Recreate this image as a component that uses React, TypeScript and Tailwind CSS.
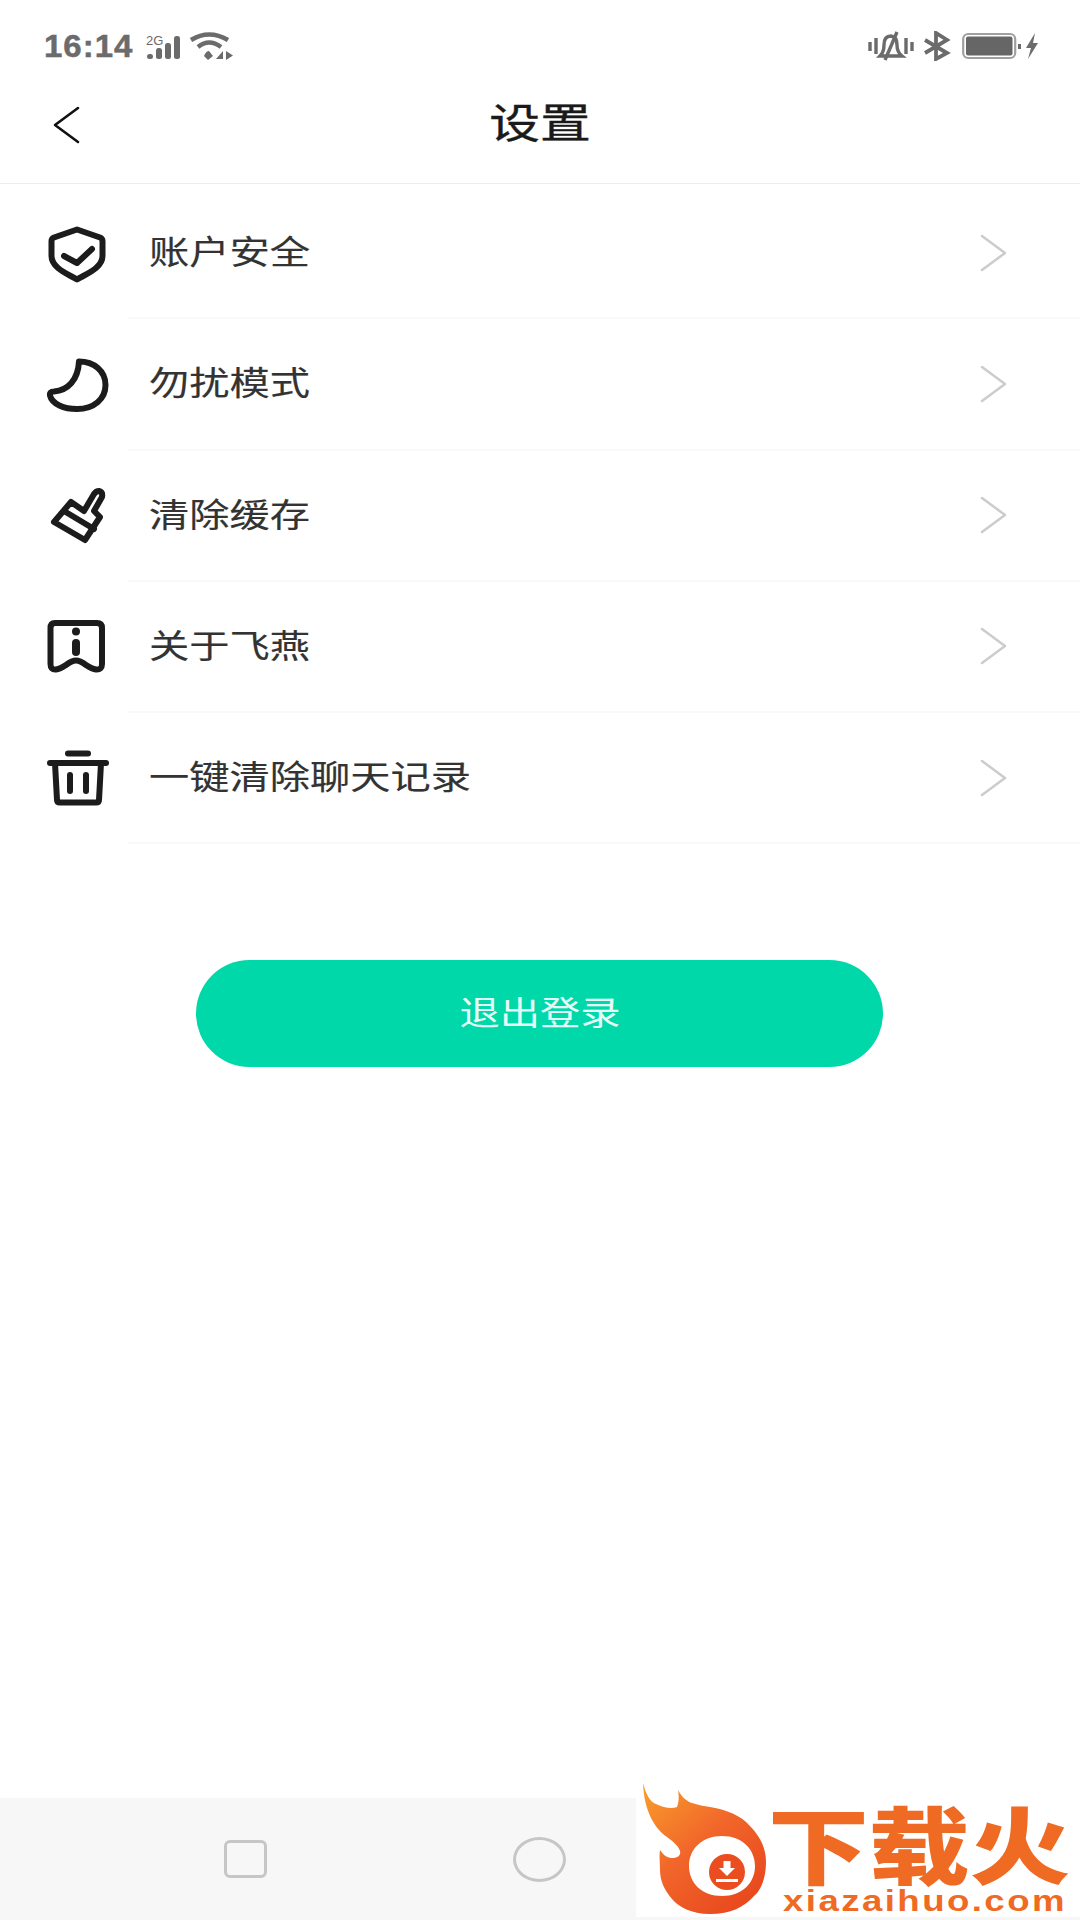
import React from "react";

const cjk = "font-['Noto_Sans_CJK_SC','Noto_Sans',sans-serif]";

function Shield() {
  return (
    <svg width="64" height="64" viewBox="0 0 64 64" fill="none" stroke="#1c1c1c" strokeWidth="6" strokeLinecap="round" strokeLinejoin="round">
      <path d="M33 8.5 L56 16.5 Q58.5 17.5 58.5 20 V35 C58.5 47 42 53 33 58.5 C24 53 7.5 47 7.5 35 V20 Q7.5 17.5 10 16.5 Z" />
      <path d="M20 35 L33 42 L48 28" />
    </svg>
  );
}
function Moon() {
  return (
    <svg width="66" height="64" viewBox="0 0 66 64" fill="none" stroke="#1c1c1c" strokeWidth="6" strokeLinecap="round" strokeLinejoin="round">
      <path d="M35 9.5 C50 9.5 61.5 19 61.5 33 C61.5 47 50 57 33 57 C20 57 8 52 6 43.5 C5.5 40.5 7 39.5 10 39.5 C24 38.5 34 28 35 9.5 Z" />
    </svg>
  );
}
function Broom() {
  return (
    <svg width="64" height="64" viewBox="0 0 64 64" fill="none" stroke="#1c1c1c" strokeWidth="6" strokeLinecap="round" strokeLinejoin="round">
      <path d="M50 11 L40 28 L27 19 L10 39 L41 57 L56 34 L50 28 L58 14 Q59 9 55 8 Q52 8 50 11 Z" />
      <path d="M20 28 L50 46" />
    </svg>
  );
}
function Info() {
  return (
    <svg width="64" height="64" viewBox="0 0 64 64" fill="none" stroke="#1c1c1c" strokeWidth="6" strokeLinecap="round" strokeLinejoin="round">
      <path d="M11 9 H53 Q58 9 58 14 V50 Q58 56 52 55.5 Q48 55 42 51 Q36 46.5 32 46.5 Q28 46.5 22 51 Q16 55 12 55.5 Q6.5 56 6.5 50 V14 Q6.5 9 11 9 Z" />
      <circle cx="32" cy="17.5" r="4" fill="#1c1c1c" stroke="none" />
      <path d="M32 29 V38" strokeWidth="8" />
    </svg>
  );
}
function Trash() {
  return (
    <svg width="66" height="64" viewBox="0 0 66 64" fill="none" stroke="#1c1c1c" strokeWidth="6" strokeLinecap="round" strokeLinejoin="round">
      <path d="M24 7.5 H44" />
      <path d="M6 17 H62" />
      <path d="M11 17 L13 54 Q13 56.5 16 56.5 H52 Q55 56.5 55 54 L57 17" />
      <path d="M26 29 V45 M42 29 V45" />
    </svg>
  );
}

function Chevron() {
  return (
    <svg width="27" height="38" viewBox="0 0 27 38" fill="none" stroke="#cccccc" strokeWidth="2.5" strokeLinecap="round" strokeLinejoin="round">
      <path d="M2 2 L25 19 L2 36" />
    </svg>
  );
}

const rows = [
  { t: "账户安全", I: Shield },
  { t: "勿扰模式", I: Moon },
  { t: "清除缓存", I: Broom },
  { t: "关于飞燕", I: Info },
  { t: "一键清除聊天记录", I: Trash },
];

function StatusLeft() {
  return (
    <div className="flex items-center">
      <span className="font-['Liberation_Sans',sans-serif] font-bold text-[32px] leading-none tracking-[1px] text-[#6b6b6b] inline-block origin-left scale-x-[1.03] w-[103px] [-webkit-text-stroke:0.5px_#6b6b6b]">16:14</span>
      <div className="relative w-[36px] h-[30px]">
        <span className="absolute left-[-1px] top-[3px] text-[13px] leading-none font-['Liberation_Sans',sans-serif] text-[#6b6b6b]">2G</span>
        <svg className="absolute left-0 top-0" width="36" height="30" viewBox="0 0 36 30" fill="#6b6b6b">
          <rect x="0" y="23" width="6" height="5" rx="2.5" />
          <rect x="9" y="17" width="6" height="11" rx="2.5" />
          <rect x="18" y="12" width="6" height="16" rx="2.5" />
          <rect x="27" y="5" width="6" height="23" rx="2.5" />
        </svg>
      </div>
      <svg className="ml-[6px]" width="46" height="30" viewBox="0 0 46 30" fill="none" stroke="#6b6b6b" strokeWidth="4.4">
        <path d="M2 9 Q20 -2 39 9" />
        <path d="M9 16 Q20 7 32 16" />
        <path d="M15 25 L19 29 L24 25 L20 20 Q17 20 15 25 Z" fill="#6b6b6b" stroke="none" />
        <path d="M34 20 L27 28 H34 Z M37 20 L44 24.5 L37 29 Z" fill="#6b6b6b" stroke="none" />
      </svg>
    </div>
  );
}

function StatusRight() {
  return (
    <div className="flex items-center">
      <svg width="46" height="30" viewBox="0 0 46 30" fill="none" stroke="#6b6b6b" strokeWidth="3.4">
        <path d="M2 11 V20 M8 7 V23 M38 7 V23 M44 11 V20" />
        <path d="M12 25 H34 Q29 21 29 14 Q29 6 23 5 Q16 5 16 14 Q16 21 12 25 Z" />
        <path d="M29 1 L17 29" />
      </svg>
      <svg className="ml-[9px]" width="28" height="30" viewBox="0 0 28 30" fill="none" stroke="#6b6b6b" strokeWidth="3.8">
        <path d="M2 9 L24 22 L13 28 V2 L24 9 L2 22" />
      </svg>
      <svg className="ml-[11px]" width="78" height="30" viewBox="0 0 78 30" fill="none">
        <rect x="1.2" y="3" width="52" height="24" rx="5" stroke="#a0a0a0" strokeWidth="2.2" />
        <rect x="4" y="5.5" width="46.5" height="19" rx="2" fill="#666666" />
        <rect x="56" y="13" width="3" height="5" fill="#6b6b6b" />
        <path d="M73 2 L64 17 H69 L66 28 L76 12 H71 Z" fill="#6b6b6b" />
      </svg>
    </div>
  );
}

function Logo() {
  return (
    <div className="absolute right-0 bottom-[3px] w-[444px] h-[119px] bg-white">
      <svg className="absolute left-0 top-[-18px]" width="140" height="137" viewBox="0 0 140 137">
        <defs>
          <linearGradient id="fl" x1="0" y1="0" x2="0.8" y2="1">
            <stop offset="0" stopColor="#f9a02c" />
            <stop offset="0.5" stopColor="#f1662a" />
            <stop offset="1" stopColor="#e8471d" />
          </linearGradient>
        </defs>
        <path
          fillRule="evenodd"
          fill="url(#fl)"
          d="M7 3 C10 14 14 22 20 24 C28 28 36 29 41 27 C43 22 43 15 42 10 C46 17 50 21 56 23 C62 25 68 26 74 27 C92 30 105 36 113 45 C124 56 130 68 130 82 C130 98 125 110 118 116 C108 127 95 134 74 134 C55 134 43 127 36 119 C28 110 24 100 24 90 C24 82 23 76 24 70 C28 76 32 78 36 78 C42 78 45 75 44 71 C42 65 36 61 31 57 C18 48 8 30 7 3 Z M86 56 C66 56 53 69 53 86 C53 103 66 116 86 116 C106 116 119 103 119 86 C119 69 106 56 86 56 Z"
        />
        <circle cx="91" cy="92" r="18" fill="#ea4d1f" />
        <path d="M87.5 81 H94.5 V88 H99 L91 96 L83 88 H87.5 Z" fill="#fff" />
        <rect x="80" y="99" width="22" height="3" fill="#fff" />
      </svg>
      <div className={`absolute left-[132px] top-[4px] font-black text-[84px] leading-[80px] text-[#ef6a23] whitespace-nowrap origin-left scale-x-[1.2] ${cjk}`}>
        下载火
      </div>
      <div className="absolute left-[147px] top-[91px] font-['Liberation_Sans',sans-serif] font-bold text-[30px] leading-[24px] tracking-[2px] text-[#ef6a23] whitespace-nowrap origin-left scale-x-[1.22]">
        xiazaihuo.com
      </div>
    </div>
  );
}

export default function App() {
  return (
    <div className={`relative w-[1080px] h-[1920px] bg-white flex flex-col overflow-hidden ${cjk}`}>
      <div className="h-[73px] shrink-0 flex items-center justify-between pl-[44px] pr-[40px] pt-[18px]">
        <StatusLeft />
        <StatusRight />
      </div>

      <div className="h-[111px] shrink-0 border-b border-[#ececec] flex items-center justify-center relative pb-[16px]">
        <div className="absolute left-[53px] top-[33px]">
          <svg width="27" height="38" viewBox="0 0 27 38" fill="none" stroke="#111" strokeWidth="2.6" strokeLinecap="round" strokeLinejoin="round">
            <path d="M25 2 L2 19 L25 36" />
          </svg>
        </div>
        <span className="text-[41px] leading-none text-[#1a1a1a] inline-block scale-x-[1.24] [-webkit-text-stroke:0.4px_#1a1a1a]">设置</span>
      </div>

      <div className="pt-[3px] shrink-0">
        {rows.map(({ t, I }) => (
          <div key={t} className="h-[131.25px] flex items-center pl-[44px] pr-[73px] relative">
            <div className="w-[105px] shrink-0 flex items-center">
              <I />
            </div>
            <span className="text-[33px] leading-none pb-[4px] text-[#333333] inline-block origin-left scale-x-[1.22] whitespace-nowrap [-webkit-text-stroke:0.15px_#333333]">{t}</span>
            <div className="ml-auto">
              <Chevron />
            </div>
            <div className="absolute left-[128px] right-0 bottom-[-1px] h-[2px] bg-[#f9f9f9]" />
          </div>
        ))}
      </div>

      <div className="mt-[117px] ml-[196px] w-[687px] h-[107px] rounded-full bg-[#00d8a9] flex items-center justify-center shrink-0">
        <span className="text-[33px] leading-none pb-[4px] text-[#e6fbf6] inline-block scale-x-[1.22]">退出登录</span>
      </div>

      <div className="flex-1" />

      <div className="h-[122px] shrink-0 bg-[#f7f7f7] flex items-center pl-[224px]">
        <div className="w-[43px] h-[38px] rounded-[6px] border-[3px] border-[#c6c6c6]" />
        <div className="w-[53px] h-[45px] rounded-[50%] border-[3px] border-[#c6c6c6] ml-[246px]" />
      </div>

      <Logo />
    </div>
  );
}
